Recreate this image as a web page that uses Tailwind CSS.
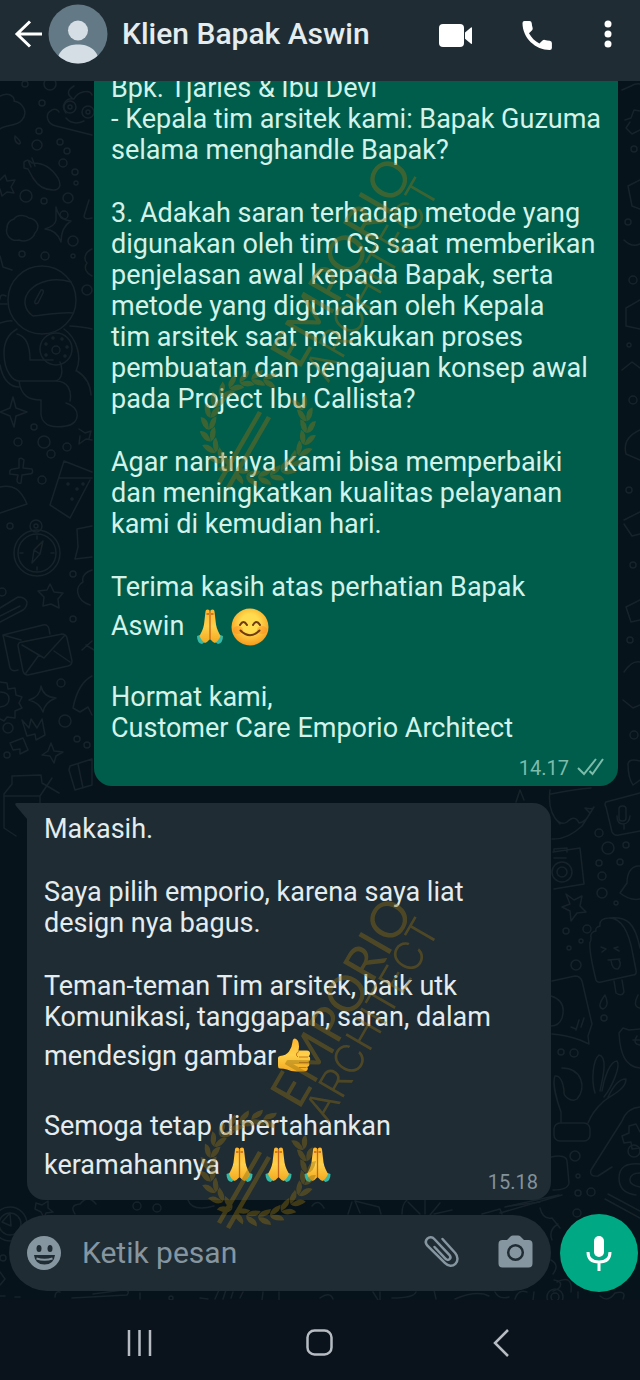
<!DOCTYPE html>
<html lang="id">
<head>
  <meta charset="UTF-8">
  <meta name="viewport" content="width=device-width, initial-scale=1">
  <title>Klien Bapak Aswin</title>
  <script src="https://cdn.jsdelivr.net/npm/@tailwindcss/browser@4"></script>
</head>
<body class="bg-[#0a131b]">
  <div class="relative flex flex-col h-screen overflow-hidden font-[Roboto,sans-serif] text-[#e4ecef]">

    <!-- Header -->
    <header class="relative z-10 shrink-0 flex items-center bg-[#1f2c34] pt-1 pb-[17px] pl-3 pr-4">
      <button type="button" aria-label="Kembali" class="shrink-0">
        <svg class="w-8 h-8" viewBox="0 0 32 32" fill="none" stroke="#fff" stroke-width="3"><path d="M30 16H5M18 3.500L5 16l13 12.500"/></svg>
      </button>
      <svg class="w-[60px] h-[60px] ml-1 shrink-0" viewBox="0 0 60 60" role="img" aria-label="Foto profil">
        <clipPath id="av"><circle cx="30" cy="30" r="29.500"/></clipPath>
        <g clip-path="url(#av)"><path fill="#637985" d="M0 0h60v60H0z"/><circle cx="30" cy="26.500" r="10" fill="#d5dee5"/><path fill="#d5dee5" d="M9 60c0-14 10-19.500 21-19.500S51 46 51 60z"/></g>
      </svg>
      <h1 class="grow ml-[14px] text-[30px] leading-[60px] font-medium whitespace-nowrap">Klien Bapak Aswin</h1>
      <button type="button" aria-label="Panggilan video" class="shrink-0">
        <svg class="w-9 h-9" viewBox="0 0 36 36" fill="#fff"><rect x="2" y="8" width="25" height="23" rx="4"/><path d="M28 16.500l6-5q1-.8 1 .6v15q0 1.400-1 .6l-6-5z"/></svg>
      </button>
      <button type="button" aria-label="Panggilan suara" class="shrink-0 ml-[46px]">
        <svg class="w-9 h-9" viewBox="0 0 36 36" fill="#fff"><path d="M5.500 5h5q2 0 2.200 2c.2 1.800.4 3.300.9 4.800q.5 1.400-.5 2.400l-3.100 3.100c2.300 4.300 6 8 10.400 10.300l3.100-3.100q1-1 2.400-.6c1.500.5 3 .8 4.800.9q2.200.2 2.200 2.200V32q0 2-2.200 2C16.500 34 3.500 22 3.500 7q0-2 2-2z"/></svg>
      </button>
      <button type="button" aria-label="Opsi lainnya" class="shrink-0 ml-[37px]">
        <svg class="w-8 h-9" viewBox="0 0 32 36" fill="#fff"><circle cx="16" cy="8" r="3.500"/><circle cx="16" cy="18" r="3.500"/><circle cx="16" cy="28" r="3.500"/></svg>
      </button>
    </header>

    <div class="relative grow min-h-0 flex flex-col bg-[#07131a]">
      <!-- Wallpaper doodles -->
      <svg class="absolute inset-0 w-full h-full" viewBox="0 81 640 1219" preserveAspectRatio="xMidYMin slice" fill="none" stroke="#17232a" stroke-width="1.500" stroke-linejoin="round" stroke-linecap="round" aria-hidden="true">
        <!-- left side -->
        <path d="M0 96c10-5 15 2 14 5 10 2 14 12 8 19-6 7-16 4-22 9M92 135L56 126c-9-2-12-12-4-16 3-2 6 0 7 2M66 113c-6-7 0-16 8-14 4-8 16-10 18-4M66 118q7 8 18 3M72 98q-8-6 2-12M15 136q8 7 4 8-5-2-4-8zM0 180l5-5 2 6 8-1-4 7 3 6-7-1-5 4-2-7"/>
        <circle cx="70" cy="107" r="6"/><circle cx="70" cy="107" r="2"/><circle cx="88" cy="112" r="6"/><circle cx="88" cy="112" r="2"/><circle cx="50" cy="84" r="6"/><circle cx="25" cy="84" r="3"/>
        <path d="M24 162q4-4 8 1 16-1 26 15 5 10-3 12-14 1-22-12l-5-9-4-1zM28 160l3 7M32 158l3 8M7 228c0-6 4-8 7-9 4-6 13-3 15-1 8 1 12 9 6 15-2 6-10 10-16 7-9 2-14-6-12-12zM56 220l0-13q3 13 15 14-10 6-10 21-4-12-16-13 10-3 11-9zM0 256l3 11 9 3M89 200l-5 16q0 4 8 2M92 249c-7 3-9 10-5 14-4 5 0 11 5 13"/>
        <circle cx="42" cy="300" r="34"/><path d="M71 282c-17-5-32-1-41 8-8 9-6 20 3 26 13-1 27-4 40-3M35 301l6-11q3-1 2 3l-5 10q-4 2-3-2zM6 296q-6-3-6 3M7 304H0M0 323q10-3 12-2"/>
        <path d="M17 329c-9 5-13 12-13 24 0 20 10 28 15 28h36c8-1 8-12 5-19M17 334c8 2 13 9 13 26h23M0 365c3 17 12 22 19 22M19 381c2 15 10 19 22 19v15c2 12 14 13 25 11 15-2 15-19 0-23M56 381c12 0 16 10 14 20M64 329c14 10 18 30 12 42M70 326q14 1 22 3M77 371q13 8 14 24"/>
        <circle cx="56" cy="349" r="16"/><circle cx="56" cy="350" r="4"/><circle cx="46" cy="344" r="1"/><circle cx="53" cy="338" r="1"/><circle cx="62" cy="339" r="1"/><circle cx="67" cy="347" r="1"/><circle cx="65" cy="356" r="1"/><circle cx="46" cy="355" r="1"/>
        <path d="M13 397l3 11 11 4-11 4-2 11-4-11-10-4 10-4zM79 429l6 4 6-2-2 8M92 440l-6-1-7 5 1-8M19 459q2-2 5 1l-1 8 9 1q2 5-3 5l-7 1-1 8q-4 1-4-3l1-5-8-1q-1-5 3-5l6-1zM0 487c14-3 21 3 27 17L0 513M64 461l28 11M59 478h33M64 461L50 505l20 13 20-38"/>
        <circle cx="68" cy="484" r="1"/><circle cx="77" cy="489" r="1"/><circle cx="72" cy="499" r="1"/><circle cx="83" cy="484" r="1"/>
        <circle cx="37" cy="553" r="23"/><circle cx="37" cy="553" r="19"/><circle cx="36" cy="526" r="6"/><circle cx="36" cy="526" r="2"/><path d="M43 541l-3 13-8 9 2-13zM34 550l6 4M37 536v3M37 567v3M20 553h3M51 553h3M92 526l-15 3 1 18-3 12 17-2M92 570c-9 3-10 8-9 12-8 4-8 18 7 23M50 584l4 8 9 1-5 6 1 9-8-4-8 2 1-9-6-6 9-1zM0 608l18-11q7 0 9 5 0 5-4 8L0 622M0 616l20-10"/>
        <path d="M21 640L3 635M3 635l40-10q5-1 6 4l1 5M3 635l7 33q2 4 8 2M22 642l40-8q4 0 5 4l5 23q0 4-4 5l-40 9q-4 0-5-4l-5-25q0-4 4-4M22 645l22 13 21-23M26 673l13-18M70 662l-16-11M86 645l8 5M82 650l10-9"/>
        <path d="M0 682l7 1 1 6 7-1 1 7 6 2-3 6 3 5-7 3 0 7-8-1-3 4-4-2M0 692q9 0 9 7t-9 8M41 686q2 11 15 12-11 4-13 14-3-9-14-12 11-3 12-14zM92 676q-14 7-19 32l7 4 8-5 4 8M22 720l7 8 2-9 6 9 5-9 3 16-9 5-1-6-8 2zM10 743l13-5 5 12-8 4 0-5-7 1zM51 743l3 8 9 1-7 4-2 7-4-7-8-1 6-4z"/>
        <path d="M12 776l29-1 1 8 17 10M12 776v8l-8 10v34l12 8M4 796h36l12-18M40 796v20M70 766l22-7 0 26-17 5-6-20zM78 764l5 24"/>
        <!-- right side -->
        <path d="M622 90l9-4q5-3 9-2M625 120l6-2 3-8 6 1M640 130l-8 4-6-6 4-6M640 180l-12 6 4 20 8 3M624 240q8 8 16 4M640 300l-14 8 0 18 14 3M622 370l10-8 8 6M640 430q-18 8-14 24l14 6M624 520l16-8M624 524l8 12 8-2M640 600l-14 7 5 15 9-2M624 672q8-12 16-10M623 700l10 8 7-3M628 764q1-6 12-3M628 764q0 14 5 21l7-5"/>
        <circle cx="634" cy="149" r="3"/><circle cx="628" cy="222" r="3"/><circle cx="633" cy="280" r="4"/><circle cx="629" cy="345" r="2"/><circle cx="633" cy="400" r="4"/><circle cx="629" cy="490" r="3"/><circle cx="633" cy="565" r="3"/><circle cx="630" cy="640" r="3"/><circle cx="634" cy="735" r="4"/>
        <path d="M516 802l4-12 4 10M550 790q-3 22 10 34M551 794q25-5 40-6M555 818q6 8 12 4 8-8 12 1 7-1 11-10l-5-5q8 2 9-1l-12 19q-15 14-30 13M606 802l34-9M606 802q-2 2 0 5l6 25q2 4 7 3l21-4"/>
        <rect x="619" y="806" width="7" height="15" rx="3"/><path d="M617 816q0 8 6 8t7-8M624 824v5"/>
        <path d="M553 852l27-4 4 36-30 5M554 852v-3l13-1v4M554 858h12"/><circle cx="562" cy="872" r="10"/><circle cx="562" cy="872" r="5"/><path d="M566 894l8 6 8-4-2 10 6 6-9 1-6 8-1-10-8-4 8-3zM640 866c-10-1-13 9-13 17l-7 10q10 8 20 6"/>
        <path d="M590 942c-1 8 4 30 6 38q1 3 5 2l32-7q4 0 3-5l-3-15c-3-18-9-37-24-37-5 0-10 2-9 8-3 1-5 2-4 5-3 0-6 3-5 6q0 5-1 5zM609 918c18-2 26 5 31 30M614 981l2 12q6 4 8-1l-2-12M601 947l5 2-4 3M618 947l-4 1 5 3M608 960l12-1M611 960q1 10 7 9 4-4 1-9M605 995q-9 12-2 14 7-3 2-14M638 995q-6 12 2 13"/>
        <path d="M552 981l23-5q5 0 7 5l10 43-4 12 1 8-9-4q-14-5-28-6M551 996q16 5 11 22-3 8-11 8M571 1027l5 2M579 1020l-3 10M584 1018l-3 9M619 1033l4-5 6 2 11-1M619 1033c1 20 6 34 21 35M633 1040h7M637 1036q-5 8 3 9"/>
        <path d="M562 1068c20 0 25 20 15 31-6 4-14-3-13-8-1-9-4-16-9-15-3 7 2 25 6 36v10M595 1093c-4-13-2-33 4-38 9 2 4 22 1 36M602 1091c2-13 8-30 15-30 4 5-5 26-13 36M608 1097c6-12 11-18 18-18 0 10-13 15-22 22-10 9-13 15-16 22"/><rect x="554" y="1123" width="36" height="18" rx="6"/>
        <path d="M640 1107q-13 1-18 14l-31 49q-2 7 7 6l14-9M640 1132l-4-8-7 2 0 7-7 3 2 7 7-1 1 7 8-1M551 1157q15-3 16 4l2 22q-1 7-16 7"/><circle cx="634" cy="1151" r="6"/><path d="M640 1164q-21-2-21 14 0 15 17 17M640 1173q-9 0-10 6t10 8M605 1199l35 19M608 1194l32 17M500 1213l62-18M505 1207l54-12"/>
        <!-- gaps around the input bar -->
        <circle cx="10" cy="1224" r="17"/><circle cx="10" cy="1224" r="11"/><path d="M2 1222l8-9 1 13zM36 1203l6 2 6-4v7l5 4-7 1-2 5-3-6-6-3zM75 1214q-6-9 5-10 8-10 16 0M188 1200q4 12 26 6M312 1206q6-8 12 2M360 1213l-5-12 24 6 2 7M352 1202l-4 12M402 1214q0-10 5-14M408 1202l12 12M425 1200v14M440 1203l-10 12M452 1210l-18 4M482 1214l18-5 2 5M510 1206l30-4M0 1272l5 7-5 6M0 1296h5M15 1297h5M55 1297q0-6 5-5M72 1298l55-3q4-5-4-5l-30 4M140 1293v6M200 1298l8 1M215 1299l4-9M223 1299l3-9M231 1298l2-6M240 1298l3-6M263 1292l-1 8M279 1292v8M320 1298q10-7 13 1M373 1292l5 8M380 1292v8M392 1298q22 0 24-6M434 1290l2 9M455 1299q22-9 34-3M495 1292q4 8 14 5M515 1299q3-10 12-7M534 1292l-1 8M553 1291c10-3 10-10 1-11M557 1282q16-8 14 10M578 1298v-6M600 1296q8 7 15-3 12-3 8 6M540 1208q3 12 12 10l8 10M552 1240q-4-10 6-16M551 1260q9 5 2 14"/>
        <circle cx="157" cy="1208" r="4"/><circle cx="137" cy="1206" r="4"/><circle cx="171" cy="1298" r="2"/><circle cx="555" cy="1297" r="8"/><circle cx="555" cy="1297" r="4"/><circle cx="3" cy="1258" r="3"/>
        <!-- scattered bubbles -->
        <circle cx="42" cy="103" r="3"/><circle cx="39" cy="131" r="3"/><circle cx="37" cy="145" r="5"/><circle cx="60" cy="142" r="3"/><circle cx="67" cy="151" r="3"/><circle cx="63" cy="163" r="4"/><circle cx="75" cy="172" r="3"/><circle cx="76" cy="183" r="2"/><circle cx="26" cy="196" r="6"/><circle cx="44" cy="201" r="3"/><circle cx="68" cy="198" r="5"/><circle cx="64" cy="215" r="4"/><circle cx="73" cy="241" r="5"/><circle cx="45" cy="256" r="4"/><circle cx="22" cy="254" r="3"/><circle cx="73" cy="256" r="2"/><circle cx="87" cy="290" r="5"/>
        <circle cx="34" cy="427" r="3"/><circle cx="18" cy="442" r="4"/><circle cx="44" cy="442" r="6"/><circle cx="51" cy="454" r="4"/><circle cx="67" cy="447" r="4"/><circle cx="42" cy="480" r="4"/><circle cx="10" cy="526" r="3"/><circle cx="73" cy="574" r="3"/><circle cx="2" cy="592" r="4"/><circle cx="73" cy="619" r="3"/><circle cx="61" cy="683" r="4"/><circle cx="8" cy="728" r="5"/><circle cx="65" cy="721" r="6"/><circle cx="77" cy="739" r="3"/><circle cx="87" cy="745" r="3"/><circle cx="7" cy="755" r="3"/>
        <circle cx="599" cy="833" r="4"/><circle cx="608" cy="848" r="6"/><circle cx="626" cy="845" r="3"/><circle cx="599" cy="863" r="3"/><circle cx="620" cy="862" r="3"/><circle cx="602" cy="876" r="4"/><circle cx="602" cy="893" r="5"/><circle cx="616" cy="903" r="2"/><circle cx="566" cy="931" r="3"/><circle cx="587" cy="929" r="4"/><circle cx="581" cy="941" r="2"/><circle cx="569" cy="948" r="2"/><circle cx="576" cy="965" r="5"/><circle cx="604" cy="1018" r="3"/><circle cx="561" cy="1052" r="3"/><circle cx="574" cy="1053" r="4"/><circle cx="575" cy="1156" r="5"/><circle cx="578" cy="1176" r="2"/><circle cx="578" cy="1193" r="3"/><circle cx="591" cy="1192" r="4"/><circle cx="577" cy="1213" r="4"/>
      </svg>

      <!-- Messages -->
      <main class="relative grow min-h-0 overflow-hidden flex flex-col justify-end gap-[17px] pl-[27px] pr-[22px] text-[27px] leading-[31px]">
        <article class="shrink-0 self-end w-[calc(100%-67px)] rounded-[18px] bg-[#005d4b] px-[17px] pt-2 pb-1.5 text-[#d3f3ea] whitespace-nowrap">
          <div class="space-y-8">
            <p>Bpk. Tjaries &amp; Ibu Devi<br>- Kepala tim arsitek kami: Bapak Guzuma<br>selama menghandle Bapak?</p>
            <p>3. Adakah saran terhadap metode yang<br>digunakan oleh tim CS saat memberikan<br>penjelasan awal kepada Bapak, serta<br>metode yang digunakan oleh Kepala<br>tim arsitek saat melakukan proses<br>pembuatan dan pengajuan konsep awal<br>pada Project Ibu Callista?</p>
            <p>Agar nantinya kami bisa memperbaiki<br>dan meningkatkan kualitas pelayanan<br>kami di kemudian hari.</p>
            <div>
              <p>Terima kasih atas perhatian Bapak</p>
              <p class="flex items-center h-[47px]">Aswin
                <svg class="w-9 h-9 ml-2" viewBox="0 0 36 36" role="img" aria-label="Tangan terlipat"><use href="#pray"/></svg>
                <svg class="w-10 h-10 ml-0.5" viewBox="0 0 40 40" role="img" aria-label="Wajah tersenyum"><use href="#smile"/></svg>
              </p>
            </div>
            <p>Hormat kami,<br>Customer Care Emporio Architect</p>
          </div>
          <div class="flex justify-end items-center mt-3 mr-[-4px] gap-2 text-xl leading-6 text-[#7dbcab]">
            <time>14.17</time>
            <svg class="w-7 h-5" viewBox="0 0 28 20" fill="none" stroke="currentColor" stroke-width="2" role="img" aria-label="Terkirim"><path d="M1 10l6 6L19 1M12.500 13l3 3L26 1"/></svg>
          </div>
        </article>

        <article class="relative shrink-0 mr-[67px] rounded-[18px] rounded-tl-none bg-[#1f2c34] px-[17px] pt-[11px] pb-3 whitespace-nowrap">
          <svg class="absolute top-0 -left-3 w-3 h-4" viewBox="0 0 12 16" fill="#1f2c34" aria-hidden="true"><path d="M12 0H2Q-1 0 1 3l11 13z"/></svg>
          <div class="space-y-8">
            <p>Makasih.</p>
            <p>Saya pilih emporio, karena saya liat<br>design nya bagus.</p>
            <div>
              <p>Teman-teman Tim arsitek, baik utk<br>Komunikasi, tanggapan, saran, dalam</p>
              <p class="flex items-center h-[46px]">mendesign gambar<svg class="w-9 h-9" viewBox="0 0 36 36" role="img" aria-label="Jempol"><use href="#thumb"/></svg></p>
            </div>
            <div>
              <p>Semoga tetap dipertahankan</p>
              <p class="flex items-center h-[46px]">keramahannya
                <svg class="w-[39px] h-9" viewBox="0 0 36 36" role="img" aria-label="Tangan terlipat"><use href="#pray"/></svg>
                <svg class="w-[39px] h-9" viewBox="0 0 36 36" role="img" aria-label="Tangan terlipat"><use href="#pray"/></svg>
                <svg class="w-[39px] h-9" viewBox="0 0 36 36" role="img" aria-label="Tangan terlipat"><use href="#pray"/></svg>
              </p>
            </div>
          </div>
          <time class="absolute right-[13px] bottom-1.5 text-xl leading-6 text-[#83929b]">15.18</time>
        </article>
      </main>

      <!-- Message input -->
      <form class="relative shrink-0 flex items-center gap-[9px] pl-[9px] pr-0.5 pt-[14px] pb-2" onsubmit="return false">
        <div class="grow min-w-0 flex items-center h-[76px] rounded-full bg-[#1f2c34] px-[17px] text-[#8696a0]">
          <button type="button" aria-label="Emoji" class="shrink-0">
            <svg class="w-9 h-9" viewBox="0 0 36 36"><circle cx="18" cy="18" r="17" fill="currentColor"/><g fill="#1f2c34"><ellipse cx="13" cy="13.500" rx="2.500" ry="3.500"/><ellipse cx="24" cy="13.500" rx="2.500" ry="3.500"/><path d="M8 20h21q-1 9.500-10.500 9.500T8 20z"/></g><path d="M10.500 23.500q8 2.500 16 0" stroke="currentColor" stroke-width="2" fill="none"/></svg>
          </button>
          <input type="text" aria-label="Ketik pesan" placeholder="Ketik pesan" class="grow min-w-0 ml-5 text-[30px] leading-9 bg-transparent text-[#e4ecef] placeholder:text-[#8696a0] outline-none">
          <button type="button" aria-label="Lampirkan" class="shrink-0">
            <svg class="w-10 h-10" viewBox="0 0 40 40" fill="none" stroke="currentColor" stroke-width="2.500" stroke-linecap="round"><path d="M20.500 6l12.700 14c3 3.500 3 8.200.2 10.800-2.900 2.700-7.200 2.600-10.300-.6L5.200 12.500C3.300 10 3.500 7.500 5.300 5.700c2-1.900 5-1.800 7 .3l15 15.800c1.400 1.600 1.400 3.300.3 4.300-1.200 1.200-2.900 1-4.200-.4L12.500 14"/></svg>
          </button>
          <button type="button" aria-label="Kamera" class="shrink-0 ml-9">
            <svg class="w-9 h-9" viewBox="0 0 36 36"><path fill="currentColor" d="M4.500 5H9l3.500-3.500q1-1 2.500-1h5q1.500 0 2.500 1L26 5h4.500q4 0 4 4v19.500q0 4-4 4h-26q-4 0-4-4V9q0-4 4-4z"/><circle cx="17.500" cy="17.500" r="7.300" fill="none" stroke="#1f2c34" stroke-width="2.500"/></svg>
          </button>
        </div>
        <button type="button" aria-label="Pesan suara" class="shrink-0 flex items-center justify-center w-[78px] h-[78px] rounded-full bg-[#00a884]">
          <svg class="w-9 h-9" viewBox="0 0 36 36"><rect x="13" y="1" width="10" height="21" rx="5" fill="#fff"/><path d="M7 17q0 10 11 10T29 17M18 26v10" fill="none" stroke="#fff" stroke-width="3"/></svg>
        </button>
      </form>
    </div>

    <!-- System navigation -->
    <nav class="shrink-0 flex items-center justify-between h-20 px-[120px] pt-1.5 text-[#b6bcc2]">
      <button type="button" aria-label="Aplikasi terbaru"><svg class="w-10 h-10" viewBox="0 0 40 40" stroke="currentColor" stroke-width="2.500"><path d="M9 7v26M19.500 7v26M30 7v26"/></svg></button>
      <button type="button" aria-label="Beranda"><svg class="w-10 h-10" viewBox="0 0 40 40" fill="none" stroke="currentColor" stroke-width="2.500"><rect x="7.500" y="7.500" width="24" height="24" rx="7"/></svg></button>
      <button type="button" aria-label="Kembali"><svg class="w-10 h-10" viewBox="0 0 40 40" fill="none" stroke="currentColor" stroke-width="2.500"><path d="M28 7L15 20l13 13"/></svg></button>
    </nav>

    <!-- Watermarks -->
    <svg class="absolute z-20 left-[190px] top-[145px] w-[260px] h-[350px] pointer-events-none" viewBox="190 885 260 350" aria-hidden="true"><use href="#mark"/></svg>
    <svg class="absolute z-20 left-[190px] top-[885px] w-[260px] h-[350px] pointer-events-none" viewBox="190 885 260 350" aria-hidden="true"><use href="#mark"/></svg>
  </div>

  <svg class="absolute w-0 h-0" aria-hidden="true">
    <defs>
      <linearGradient id="skin" x1="0" y1="0" x2="0" y2="1"><stop offset="0" stop-color="#ffb52e"/><stop offset=".5" stop-color="#ffd04a"/><stop offset="1" stop-color="#f3a91f"/></linearGradient>
      <radialGradient id="face" cx=".5" cy=".4" r=".6"><stop offset=".4" stop-color="#ffdc4f"/><stop offset="1" stop-color="#f79a1c"/></radialGradient>
      <g id="pray">
        <path fill="#35b8a5" d="M5 27l7-2.500 3 7-5 3.500q-5-1-5-8zM31 27l-7-2.500-3 7 5 3.500q5-1 5-8z"/>
        <path fill="url(#skin)" d="M13.500 2.500q0-2 2-2t2.500 2q.5-2 2.500-2t2 2l1.500 13q.5 3 2 6.500l2.500 5q-2 5-5.500 7-2.500-1-5-4-2.500 3-5 4-3.500-2-5.500-7l2.500-5q1.500-3.500 2-6.500z"/>
        <path d="M18 2v28M14.500 5h2.500M19 5h2.500" fill="none" stroke="#c5661b" stroke-width="1.300"/>
      </g>
      <g id="smile">
        <circle cx="20" cy="20" r="18.500" fill="url(#face)"/>
        <ellipse cx="8" cy="23" rx="5" ry="4" fill="#ff7b1c" opacity=".35"/><ellipse cx="32" cy="23" rx="5" ry="4" fill="#ff7b1c" opacity=".35"/>
        <path d="M10 18q3.500-6 7 0M23 18q3.500-6 7 0M10.500 23.500q9.500 9.500 19 0" fill="none" stroke="#6e3b10" stroke-width="2" stroke-linecap="round"/>
      </g>
      <g id="thumb">
        <path fill="url(#skin)" d="M2 20q0-1.500 2-2 6-.5 9-4.500 3-4 3.500-9.500.2-3.500 2.500-3.500 4 1 4 8 0 2.500-.7 4H31q3 .3 3 3 0 2-1.500 2.800 2 .7 1.700 3-.2 2-2 2.600 1.500.9 1.200 2.900-.4 1.700-2.200 2.200 1 1 .5 2.300-.7 2.200-4.200 2.200H20q-5 0-9-2-3-1-7-1-2 0-2-2.500z"/>
        <path d="M23 19h9M23 24.500h9M23 29.500h7.500M23 13.500q-2 .5-2.500 2.500t1.500 3" fill="none" stroke="#c9761a" stroke-width="1"/>
      </g>
      <path id="leaf" d="M0 0q1-7 13-8-1 8-13 8z"/>
      <g id="mark" fill="#8f6f12" opacity=".42">
        <text font-family="Lato" font-size="50" transform="translate(299 1111) rotate(-60)">EMPORIO</text>
        <text font-family="Inter" font-size="40" font-weight="300" transform="translate(328 1124) rotate(-60)">ARCHITECT</text>
        <path d="M258 1151l4 2-41 71-4-2zM267 1156l4 2-41 71-4-2z"/>
        <g id="wreath"></g>
      </g>
    </defs>
  </svg>

  <script>
    // Two branches of leaves that start at the lower left and stay open at the upper right
    const wreath = document.getElementById('wreath');
    function leaf(angle, side, dir) {
      const use = document.createElementNS('http://www.w3.org/2000/svg', 'use');
      use.setAttribute('href', '#leaf');
      use.setAttribute('transform', 'translate(258 1168) rotate(' + angle + ') translate(49 0) rotate(' + (dir * 90) + ') scale(1 ' + side + ')');
      wreath.appendChild(use);
    }
    for (let a = 122; a <= 280; a += 14) {
      leaf(a, 1, 1);
      leaf(a, -1, 1);
    }
    for (let a = 118; a >= -25; a -= 14) {
      leaf(a, 1, -1);
      leaf(a, -1, -1);
    }
  </script>
</body>
</html>
